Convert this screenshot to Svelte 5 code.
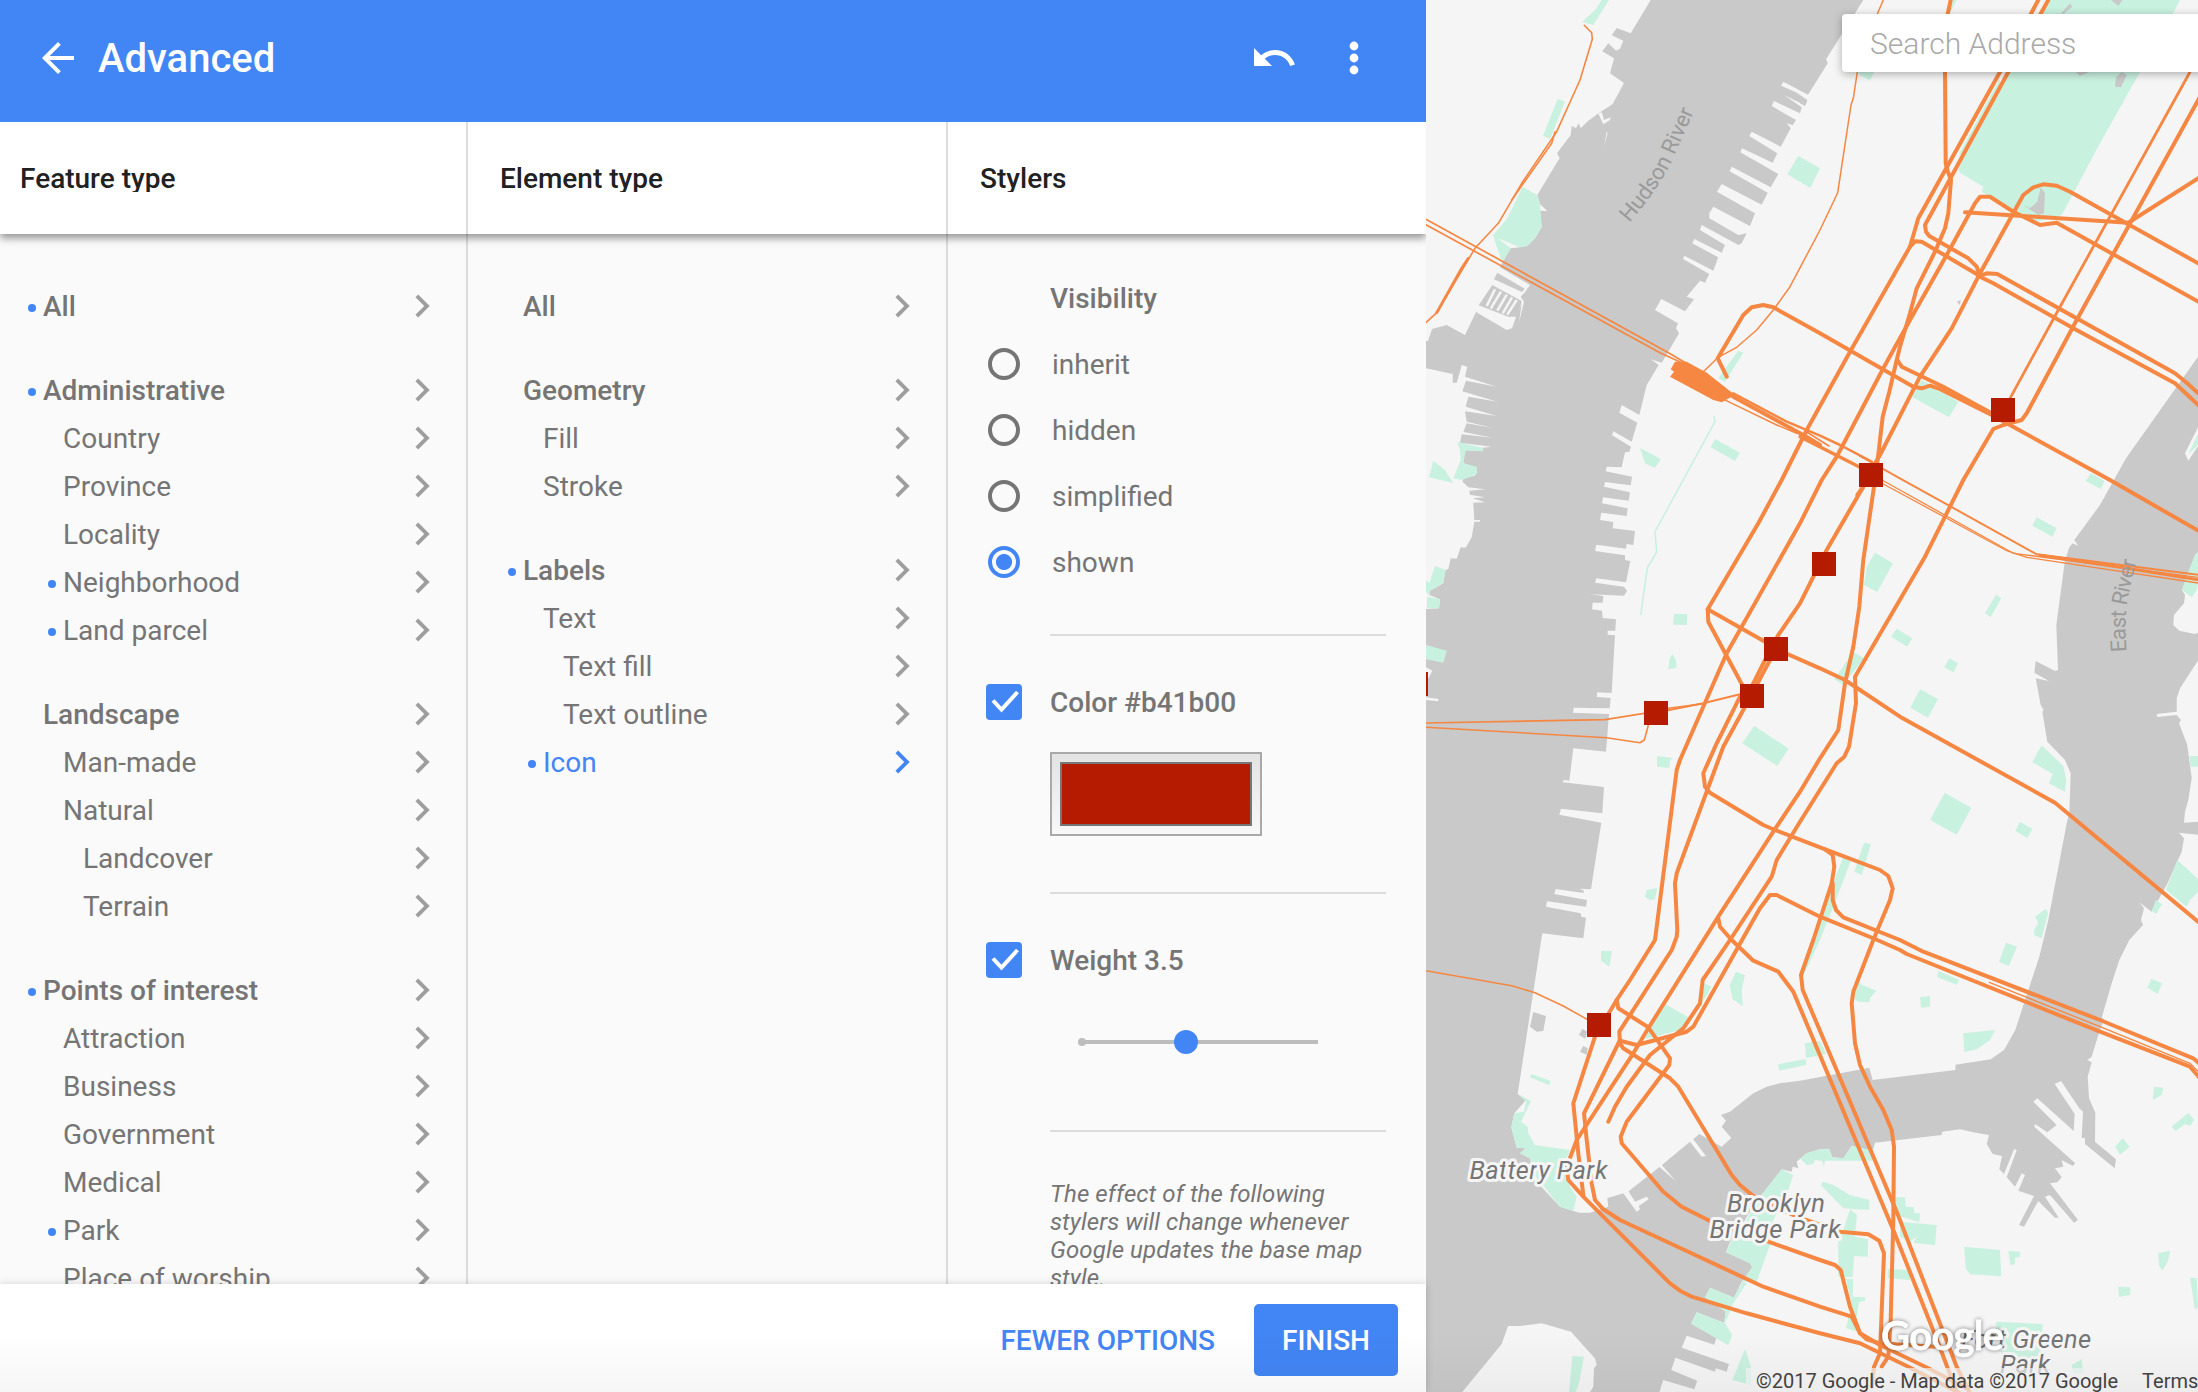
<script>
  const features = [
    [{ name: 'All', dot: true }],
    [
      { name: 'Administrative', dot: true },
      { name: 'Country', level: 1 },
      { name: 'Province', level: 1 },
      { name: 'Locality', level: 1 },
      { name: 'Neighborhood', level: 1, dot: true },
      { name: 'Land parcel', level: 1, dot: true },
    ],
    [
      { name: 'Landscape' },
      { name: 'Man-made', level: 1 },
      { name: 'Natural', level: 1 },
      { name: 'Landcover', level: 2 },
      { name: 'Terrain', level: 2 },
    ],
    [
      { name: 'Points of interest', dot: true },
      { name: 'Attraction', level: 1 },
      { name: 'Business', level: 1 },
      { name: 'Government', level: 1 },
      { name: 'Medical', level: 1 },
      { name: 'Park', level: 1, dot: true },
      { name: 'Place of worship', level: 1 },
    ],
  ];

  const elements = [
    [{ name: 'All' }],
    [{ name: 'Geometry' }, { name: 'Fill', level: 1 }, { name: 'Stroke', level: 1 }],
    [
      { name: 'Labels', dot: true },
      { name: 'Text', level: 1 },
      { name: 'Text fill', level: 2 },
      { name: 'Text outline', level: 2 },
      { name: 'Icon', level: 1, dot: true, active: true },
    ],
  ];

  let visibility = $state('shown');
  const modes = ['inherit', 'hidden', 'simplified', 'shown'];

  // Map geometry is stored per sheet (A-F); each sheet has its own origin
  // and three units to the pixel.
  const sheets = { A: [1420, 0], B: [1800, 0], C: [1420, 460], D: [1800, 460], E: [1420, 920], F: [1800, 920] };

  function points(trace) {
    let origin = sheets.A;
    const out = [];
    for (const token of trace.trim().split(/\s+/)) {
      if (sheets[token]) {
        origin = sheets[token];
        continue;
      }
      const [x, y] = token.split(',').map(Number);
      out.push(`${(origin[0] + x / 3).toFixed(1)},${(origin[1] + y / 3).toFixed(1)}`);
    }
    return out.join(' ');
  }

  const land = [
    'A 18,0 692,0 632,100 590,84 575,106 610,122 600,146 588,152 565,130 547,154 582,175 570,220 612,249 578,312 540,337 505,362 482,385 476,370 468,384 455,378 452,405 411,460 419,474 352,585 360,612 382,633 360,632 365,682 345,715 322,738 300,742 272,745 250,782 240,802 330,855 316,875 302,890 312,905 297,968 305,910 290,945 276,985 260,990 168,936 135,1005 80,975 36,987 24,1024 18,1022',
    'A 18,1105 98,1122 98,1148 110,1148 118,1122 125,1095 142,1100 135,1130 230,1160 138,1142 127,1174 232,1205 145,1190 137,1220 230,1248 135,1234 140,1265 220,1284 140,1270 130,1296 218,1313 125,1303 120,1328 215,1340 130,1350 130,1390 170,1405 165,1428 130,1430 C 128,65 145,82 195,88 148,92 150,104 195,112 158,115 195,127 160,128 163,180 180,180 180,185 163,185 155,232 137,263 122,262 110,296 92,295 85,327 76,330 70,370 30,392 28,405 60,418 57,445 18,447',
    'A 1330,0 1218,178 1223,190 1164,284 1090,245 1083,257 1128,277 1162,300 1155,316 1092,285 1145,322 1140,340 1062,303 1055,318 1128,360 1118,376 1100,370 1112,385 1082,440 995,395 988,408 1072,460 1058,488 966,445 961,457 1075,522 1052,562 935,500 929,514 1043,578 1025,614 905,552 891,575 1005,640 990,678 880,620 868,640 868,655 955,705 980,700 965,730 955,735 845,675 840,690 915,735 905,758 823,717 817,730 895,772 880,812 793,767 789,777 868,822 855,848 840,842 800,890 822,898 795,934 724,897 705,930 774,970 768,985 777,1000 745,1055 725,1088 692,1078 716,1095 680,1155 658,1245 605,1215 598,1238 652,1268 635,1325 580,1294 576,1306 633,1340 628,1355 615,1357 605,1402 560,1400 557,1414 636,1430 C 632,76 555,66 552,80 630,97 626,122 549,112 546,130 623,145 620,168 544,158 540,180 580,186 578,205 645,213 640,255 620,252 618,266 529,254 525,273 615,286 615,300 631,303 618,367 529,355 525,368 612,380 621,392 612,407 510,403 550,408 548,428 518,428 516,448 546,452 548,474 588,478 586,512 563,512 563,524 585,526 575,699 531,697 531,711 572,714 569,745 461,743 459,758 567,762 558,875 460,865 448,962 430,960 429,967 552,981 547,1060 423,1046 418,1064 544,1088 513,1288 478,1286 492,1292 490,1299 407,1287 403,1302 501,1320 498,1340 381,1324 378,1340 482,1360 484,1370 498,1373 490,1435 367,1420 E 293,522 318,540 283,580 274,622 290,683 318,685 300,700 330,715 345,780 420,860 460,873 478,878 510,878 565,860 562,834 612,820 628,812 722,738 810,665 845,710 858,708 820,658 838,642 905,680 934,654 905,620 918,602 903,585 930,575 1000,520 1040,500 1080,490 F 0,482 208,443 218,480 466,450 467,434 572,418 612,390 646,330 672,250 718,110 745,0 D 800,1090 808,1060 812,940 795,900 742,845 727,755 731,750 722,735 707,655 747,663 703,638 707,603 765,633 774,630 769,495 795,300 808,262 818,250 835,258 823,240 900,135 975,0 B 985,1365 1200,1062 1200,0',
    'D 1200,270 1185,285 1160,350 1146,390 1155,405 1152,430 1122,465 1120,495 1138,512 1185,522 1200,516',
    'D 1200,592 1140,685 1130,715 1130,755 1070,762 1071,771 1130,765 1143,780 1137,790 1162,855 1175,955 1165,1020 1155,1055 1152,1088 1200,1085 1200,1125 1137,1118 1152,1135 1145,1175 1100,1275 1055,1355 1018,1327 1032,1345 1023,1380 1029,1395 F 988,60 958,120 935,190 905,293 912,298 895,345 875,410 862,420 875,427 863,470 867,535 886,578 885,665 948,718 944,745 855,672 855,655 845,653 849,575 838,565 783,483 764,492 824,582 821,633 712,535 700,545 770,615 742,637 705,612 703,620 826,730 818,738 785,720 790,740 765,745 785,772 772,787 750,790 834,900 822,908 750,825 735,830 776,893 765,893 715,843 672,920 657,915 702,828 655,812 675,765 665,760 645,800 620,772 650,690 642,688 612,762 598,748 606,708 578,702 560,672 567,645 535,640 480,628 427,635 425,645 225,668 218,692 155,678 130,715 97,712 88,688 60,688 E 1160,700 1130,725 1135,745 1118,740 1115,755 1085,748 1005,850 975,900 930,965 918,997 990,1030 997,1042 965,1085 942,1133 870,1103 855,1132 917,1175 912,1208 830,1177 814,1210 890,1250 883,1274 800,1247 785,1283 927,1332 920,1355 887,1345 885,1355 766,1313 754,1350 832,1382 823,1408 730,1380 717,1420 F 1200,1420',
    'E 127,1416 245,1272 264,1218 300,1218 365,1210 453,1235 500,1288 525,1315 530,1335 522,1345 520,1400 510,1416',
    'B 1155,1360 1200,1270 1200,1330 1165,1382',
    'C 18,622 37,632 18,670',
    'C 18,712 56,717 54,724 18,720',
    'E 715,738 725,735 768,784',
    'E 610,820 625,812 645,845 680,830 686,838 656,858 660,868 650,875',
    'A 535,340 545,337 552,360 572,352 570,360 550,373',
    'A 560,395 563,398 553,438',
  ];

  const ponds = [
    'A 232,818 314,866 306,876 222,838',
    'A 217,855 305,903 292,950 265,950 176,916',
    'B 0,288 22,302 15,318 0,310',
    'E 340,276 378,288 370,333 350,335 330,320',
    'E 487,326 502,335 495,356 477,345',
    'E 490,378 503,385 500,404 480,395',
  ];

  const lakes = [
    'B 665,612 690,625 712,605 722,563 735,580 732,640 715,645',
    'B 810,10 817,20 790,42 782,42',
    'B 828,216 867,216 840,228',
    'B 948,232 965,216 980,225 963,262 945,260',
    'B 933,0 967,0 955,18',
    'B 470,905 482,900 480,915',
  ];

  const docks = ['A 225,868 200,918', 'A 243,875 212,926', 'A 260,884 232,932', 'A 276,892 248,940', 'A 290,900 262,944'];

  const parks = [
    'A 545,0 567,0 520,75 486,66 525,30',
    'A 413,296 435,305 390,417 369,407',
    'A 308,560 352,586 360,612 365,682 345,715 322,738 300,742 232,714 272,745 250,782 242,775 219,706 262,655',
    'A 1135,468 1200,505 1171,564 1102,523',
    'A 955,1052 970,1058 915,1145 895,1135',
    'A 885,1317 960,1358 945,1383 872,1342',
    'A 660,1343 723,1378 705,1404 675,1390',
    'A 112,1326 190,1344 190,1354 137,1352 130,1390 170,1400 172,1420 160,1428 C 125,60 100,55 122,0 A 120,1350',
    'C 40,2 75,30 100,69 27,52',
    'C 45,318 78,330 68,370 30,392 25,405 18,395 18,360 28,370',
    'C 22,410 60,418 57,445 20,445',
    'C 18,555 80,572 70,608 18,598',
    'C 762,462 802,462 801,495 759,494',
    'C 757,582 768,600 770,623 745,628 748,598',
    'C 1002,797 1106,866 1072,918 967,850',
    'C 711,888 760,894 750,900 748,924 711,920',
    'C 680,1290 712,1284 705,1318 690,1320 675,1310',
    'B 750,0 1140,0 1118,42 1020,216 900,430 785,645 710,665 640,635 545,575 550,560 480,518 475,505 630,216',
    'B 600,235 500,420 478,462 488,462 600,262',
    'B 450,0 470,0 450,40',
    'B 175,216 222,216 210,242 180,225',
    'B 365,1140 475,1205 447,1252 335,1190',
    'B 1200,1290 1165,1362 1200,1330',
    'D 873,40 913,62 903,88 857,63',
    'D 710,172 770,205 757,230 697,197',
    'D 1200,270 1185,285 1160,350 1146,390 1175,412 1190,390 1200,340',
    'D 225,278 279,310 232,396 192,375 200,320',
    'D 588,404 604,415 572,471 555,460',
    'D 290,506 337,535 322,560 273,530',
    'D 160,575 192,595 130,675 103,658',
    'D 448,595 474,610 460,637 433,622',
    'D 360,688 414,717 384,773 331,743',
    'D 725,856 790,918 799,960 795,996 747,970 758,942 697,907',
    'D 434,998 514,1043 470,1124 390,1080',
    'D 660,1085 697,1107 682,1134 646,1112',
    'D 192,1148 213,1152 185,1245 163,1235',
    'D 130,1190 152,1203 100,1340 60,1440 F 30,125 8,170 0,155',
    'D 738,1346 744,1360 725,1435 702,1425 702,1410 715,1390 705,1370',
    'D 1132,1200 1200,1262 1200,1290 1170,1320 1160,1340 1098,1290',
    'D 1068,1320 1086,1333 1068,1362 1055,1352',
    'D 1168,888 1200,888 1200,920 1172,920',
    'E 543,93 576,93 568,140 543,122',
    'E 948,155 975,165 965,210 968,258 938,238 929,195',
    'E 735,252 805,292 780,330 675,358 690,320',
    'E 852,190 875,200 845,250',
    'E 335,462 392,483 388,496 330,472',
    'E 1155,370 1200,362 1218,402 1158,414',
    'E 1074,433 1158,417 1158,435 1078,452',
    'E 293,522 333,543 303,605 323,620 325,640 345,675 380,680 450,690 430,740 450,800 470,830 460,873 420,860 340,760 330,715 300,700 318,685 290,683 274,622 283,580 312,575 318,545',
    'E 1085,748 1120,765 1095,840 1060,900 1050,975 1010,1085 965,1085 997,1042 990,1030 918,997 935,960 980,900 1005,850',
    'E 870,1103 942,1133 968,1085 980,1090 940,1150 915,1210 937,1245 925,1276 814,1212 830,1177 912,1208 917,1175 855,1132',
    'E 975,1288 993,1340 993,1395 937,1380',
    'E 457,1308 492,1310 478,1385 467,1416 447,1416',
    'E 1130,725 1160,700 F 60,688 88,688 97,712 130,715 155,678 220,692 217,722 75,722 72,740 66,722 45,720 40,732 20,735 0,715',
    'F 175,190 229,212 210,235 208,247 175,245 162,235',
    'F 360,232 390,228 390,260 363,263',
    'F 490,340 586,330 570,360 530,388 493,396',
    'F 618,68 651,80 626,138 597,125',
    'F 415,152 478,180 470,194 412,172',
    'F 1054,176 1086,190 1073,222 1042,203',
    'F 1062,500 1090,503 1085,525 1058,540',
    'F 1165,578 1183,600 1170,617 1155,612 1127,633 1115,620',
    'F 968,655 989,680 960,704 945,680',
    'F 1075,1000 1111,992 1103,1025 1087,1053 1077,1035',
    'F 955,1100 990,1102 991,1125 957,1131',
    'F 1170,1073 1190,1075 1194,1160 1185,1170',
    'F 493,980 600,990 604,1069 510,1063 497,1045',
    'F 625,992 660,995 660,1010 645,1013 645,1033 631,1035',
    'F 70,785 100,795 150,825 208,840 208,870 130,865 62,795',
    'F 150,868 171,885 165,950 204,958 203,1010 163,1008 158,1072 115,1070 115,930 130,930',
    'F 285,832 315,832 317,860 342,862 342,878 360,880 358,907 320,895 285,885',
    'F 300,905 410,915 405,976 340,968 352,948 330,965 300,950',
    'F 263,1047 330,1050 330,1080 263,1075',
    'F 138,1077 160,1078 158,1130 195,1132 195,1143 178,1145 165,1220 190,1240 138,1225 155,1150',
    'F 588,1205 728,1212 720,1310 640,1330 595,1290',
    'F 815,1335 845,1318 850,1362 820,1360',
  ];

  const trails = ['A 882,1248 885,1265 C 705,215 710,275 682,325 662,465'];

  // [line width in px, trace]
  const routes = [
    [4, 'B 452,0 443,42 435,216 437,490 442,510 453,540 445,640 435,685 405,755 350,865 330,940 300,1040 290,1080 268,1175 248,1250 232,1390 D 222,80 190,300 178,440 160,560 135,670 115,810 60,895 0,995 C 1060,1115 895,1370 E 685,325 640,400 470,660 440,740 445,780 490,830 750,1090 780,1112 815,1130 980,1180 1200,1240 F 180,1270 325,1340 480,1420'],
    [4, 'B 715,0 600,216 355,655 330,740 153,1050 20,1290 -55,1440 C 1015,190 863,448 865,485 965,672 996,708'],
    [4, 'B 745,0 625,216 375,675 378,695 388,708 505,775 530,800 540,830 580,850 820,985 1125,1150 1200,1220'],
    [4, 'B 330,740 345,724 365,725 540,828 560,820 592,822 1125,1120 1160,1148 1200,1185'],
    [4, 'B 495,637 985,668 1200,531'],
    [4, 'B 1200,290 830,960 680,1240 665,1260 610,1275 580,1287 490,1440 D 375,290 165,650 168,730 147,860 133,890 110,910 0,1085 C 1070,1200 1055,1250 930,1440 E 848,180 840,250 790,325 690,405 620,500 585,560 565,605'],
    [2.8, 'B 1170,216 775,930 630,1195'],
    [4, 'B 1200,908 770,668 720,675 640,635 570,590 540,590 525,610 440,765 330,960 250,1105 110,1370 65,1440 D 0,190 C 965,500 920,580 780,900 770,930 705,1440 E 705,60 630,180 590,240 560,290 525,350 460,550 475,700 490,825'],
    [4, 'B 1200,793 810,575 770,557 730,553 700,562 670,585 540,820 455,985 360,1130 240,1365 213,1410 D 190,80 80,270 0,430 C 1075,525 1035,600 995,680 960,710 890,850 850,940 855,980 870,998 1030,1095 1065,1110 1200,1162 D 240,1230 265,1248 278,1285 270,1320 220,1440 F 160,215 155,250 165,370 180,435 210,500 250,570 275,630 282,680 280,900 272,1200 265,1310 245,1340'],
    [4, 'C 1050,600 975,740 910,860 862,990 770,1240 765,1270 772,1410 E 770,50 755,90 598,335 600,370 610,385 750,475 775,500 935,765 960,795 1000,828 1130,890 F 120,935 205,943 238,962 252,1000 240,1300 222,1340 215,1400'],
    [4, 'C 863,448 1035,545 1068,567 1200,625 D 135,660 300,770 765,1028 1200,1390'],
    [4, 'A 920,1130 893,1075 970,945 995,922 1030,915 1060,922 1200,1000 B 340,1160 365,1165 390,1157 415,1165 575,1245 620,1270 930,1440 D 1200,215'],
    [4, 'B 292,1080 305,1100 430,1160 575,1240'],
    [4, 'E 590,240 595,265 685,322 750,415 748,435 620,605 602,650 605,670 730,815 785,860 870,903 1045,965 1200,1020 F 105,1035 122,1050 150,1160 180,1240 200,1258 240,1270 405,1280'],
    [4, 'E 600,360 492,580 500,660 515,790 525,840 550,868 600,900 750,970 1030,1100 1200,1160 F 155,1190 180,1240 240,1275 385,1345 500,1405'],
    [4, 'E 600,362 650,375 800,335 820,320 1000,0 C 1020,1345 1050,1305 1070,1305 1200,1370 D 225,1437 F 300,90 320,102 900,335 1170,440 1200,475'],
    [4, 'D 75,1168 98,1185 103,1220 95,1270 40,1440 F 3,165 8,210 290,875 470,1340 510,1420'],
    [4, 'D 98,1270 98,1320 108,1350 130,1372 300,1440 F 370,95 900,300 1180,415 1200,432'],
    [4, 'C 895,1375 900,1400 935,1440 E 1000,122 1075,155 1120,215 F 280,930 415,1270 470,1416'],
    [1.3, 'F 568,187 900,320 1170,430 1200,460'],
    [1.6, 'A 493,76 515,98 517,118 480,240 410,395 305,550 235,670 165,745 50,938 18,968'],
    [1.6, 'A 405,395 395,430 275,600'],
    [2.8, 'A 145,775 125,805 50,938'],
    [1.7, 'A 18,658 740,1055 850,1120'],
    [1.7, 'A 18,674 720,1058 800,1095'],
    [1.5, 'B 250,0 232,42 172,216 160,295 153,315 113,578 60,690 -30,860 A 1060,930 1010,990 950,1042 893,1073 850,1115'],
    [4, 'A 900,1160 940,1190 1155,1308 1200,1335'],
    [2.5, 'A 940,1180 1100,1265 1200,1307 B 120,1335 215,1385'],
    [1.4, 'A 905,1195 1070,1275 1130,1300'],
    [3.4, 'B 0,1310 180,1402'],
    [1.5, 'B 20,1296 87,1338'],
    [2, 'B 180,1368 305,1438 D 710,283 1200,345'],
    [1.3, 'D 250,62 640,280 1200,353'],
    [1.3, 'D 250,72 620,272 680,292 1200,370'],
    [3, 'D 720,286 980,325 1200,360'],
    [1.7, 'C 18,789 555,779 672,760'],
    [1.6, 'C 18,802 560,833 660,848 673,840 685,796'],
    [2, 'C 744,751 850,730 960,703'],
    [1.5, 'C 744,745 850,731'],
    [1.5, 'E 18,152 275,197 345,218 430,258 505,300'],
    [4, 'D 190,80 172,105'],
  ];

  const yard = 'A 765,1085 800,1085 860,1118 945,1185 905,1207 880,1200 750,1130 762,1115 752,1108';

  const stations = [
    [1991, 398],
    [1859, 463],
    [1812, 552],
    [1764, 637],
    [1740, 684],
    [1644, 701],
    [1404, 672],
    [1587, 1013],
  ];
</script>

{#snippet list(groups)}
  {#each groups as group}
    <ul>
      {#each group as item}
        <li class="level-{item.level ?? 0}" class:active={item.active}>
          <span class="mark" class:dot={item.dot}></span>
          <span class="name">{item.name}</span>
          <svg class="chevron" viewBox="0 0 24 24"><path d="M10 6L8.590 7.410 13.170 12l-4.580 4.590L10 18l6-6z" /></svg>
        </li>
      {/each}
    </ul>
  {/each}
{/snippet}

{#snippet check()}
  <span class="check"><svg viewBox="0 0 36 36"><path d="M7 16.500l8.500 9L31.500 8" /></svg></span>
{/snippet}

<div class="app">
  <section class="panel">
    <header class="bar">
      <svg viewBox="0 0 24 24"><path d="M20 11H7.830l5.590-5.590L12 4l-8 8 8 8 1.410-1.410L7.830 13H20v-2z" /></svg>
      <h1>Advanced</h1>
      <svg viewBox="0 0 24 24"><path d="M12.500 8c-2.650 0-5.050.990-6.900 2.600L2 7v9h9l-3.620-3.620c1.390-1.160 3.160-1.880 5.120-1.880 3.540 0 6.550 2.310 7.600 5.500l2.370-.780C21.080 11.030 17.150 8 12.500 8z" /></svg>
      <svg class="more" viewBox="0 0 24 24"><circle cx="12" cy="6" r="2.200" /><circle cx="12" cy="12" r="2.200" /><circle cx="12" cy="18" r="2.200" /></svg>
    </header>

    <div class="heads">
      <h2><span>Feature type</span></h2>
      <h2><span>Element type</span></h2>
      <h2><span>Stylers</span></h2>
    </div>

    <div class="columns">
      <div class="column">{@render list(features)}</div>
      <div class="column">{@render list(elements)}</div>
      <div class="column stylers">
        <h3>Visibility</h3>
        <div class="modes">
          {#each modes as mode}
            <button class="mode" class:on={visibility === mode} onclick={() => (visibility = mode)}>
              <span class="radio"></span><span class="label">{mode}</span>
            </button>
          {/each}
        </div>
        <hr />
        <div class="option">{@render check()}<h3 class="label">Color #b41b00</h3></div>
        <div class="well"><div class="swatch"></div></div>
        <hr />
        <div class="option">{@render check()}<h3 class="label">Weight 3.5</h3></div>
        <svg class="slider" viewBox="0 0 242 24">
          <path d="M4 12H240" />
          <circle class="stop" cx="4" cy="12" r="4" />
          <circle class="knob" cx="108" cy="12" r="12" />
        </svg>
        <hr />
        <p>The effect of the following stylers will change whenever Google updates the base map style.</p>
      </div>
    </div>

    <footer>
      <button class="fewer">FEWER OPTIONS</button>
      <button class="finish">FINISH</button>
    </footer>
  </section>

  <section class="map">
    <svg class="canvas" viewBox="1426 0 772 1392">
      <g class="land">{#each land as t}<polygon points={points(t)} />{/each}</g>
      <g class="water">{#each ponds as t}<polygon points={points(t)} />{/each}</g>
      <g class="dock">{#each docks as t}<polyline points={points(t)} />{/each}</g>
      <g class="park">{#each parks as t}<polygon points={points(t)} />{/each}</g>
      <g class="water">{#each lakes as t}<polygon points={points(t)} />{/each}</g>
      <g class="trail">{#each trails as t}<polyline points={points(t)} />{/each}</g>
      <g class="route">{#each routes as [width, t]}<polyline points={points(t)} stroke-width={width} />{/each}</g>
      <polygon class="yard" points={points(yard)} />
      <g class="station">{#each stations as [x, y]}<rect {x} {y} width="24" height="24" />{/each}</g>

      <path id="hudson" d="M1629 223Q1661 187 1675 154L1700 98" fill="none" />
      <path id="east" d="M2126.500 652Q2124 612 2129 594L2142 535" fill="none" />
      <g class="river">
        <text><textPath href="#hudson" textLength="130">Hudson River</textPath></text>
        <text><textPath href="#east" textLength="92">East River</textPath></text>
      </g>
      <g class="place">
        <text x="1469.500" y="1179" textLength="138">Battery Park</text>
        <text x="1776" y="1212" text-anchor="middle" textLength="98">Brooklyn</text>
        <text x="1775" y="1238" text-anchor="middle" textLength="131">Bridge Park</text>
        <text x="2026" y="1348" text-anchor="middle" textLength="130">Fort Greene</text>
        <text x="2025" y="1373" text-anchor="middle" textLength="50">Park</text>
      </g>
      <text class="logo" x="1881" y="1350" textLength="123">Google</text>
    </svg>
    <div class="search">Search Address</div>
    <div class="credits"><span>©2017 Google - Map data ©2017 Google</span><span>Terms</span></div>
  </section>
  <div class="fade"></div>
</div>

<style>
  :global(body) {
    margin: 0;
    background: #f5f5f5;
  }
  .app {
    position: relative;
    display: flex;
    width: 2198px;
    height: 1392px;
    overflow: hidden;
    font: 28px/48px Roboto, sans-serif;
    color: #757575;
  }
  h1, h2, h3, p, ul, hr {
    margin: 0;
    padding: 0;
    border: 0;
  }
  h1, h2, h3 {
    font-weight: 500;
  }
  button {
    border: 0;
    padding: 0;
    background: none;
    font: inherit;
    color: inherit;
    text-align: left;
  }
  .panel {
    display: flex;
    flex-direction: column;
    flex: none;
    width: 1426px;
    background: #fafafa;
    position: relative;
    z-index: 1;
  }
  .bar {
    display: flex;
    align-items: center;
    flex: none;
    box-sizing: border-box;
    height: 122px;
    padding: 0 48px 6px 34px;
    background: #4285f4;
    color: #fff;
  }
  .bar svg {
    width: 48px;
    height: 48px;
    fill: #fff;
  }
  .bar h1 {
    flex: 1;
    padding: 2px 0 0 16px;
    font-size: 40px;
  }
  .bar .more {
    margin-left: 32px;
  }
  .heads, .columns {
    display: grid;
    grid-template-columns: 468px 480px 478px;
  }
  .heads {
    flex: none;
    height: 112px;
    background: #fff;
    box-shadow: 0 4px 8px rgba(0, 0, 0, 0.42);
    clip-path: inset(0 0 -20px 0);
    position: relative;
  }
  .heads h2 {
    padding: 43px 0 0 32px;
    border-right: 2px solid #dcdcdc;
    font-size: 28px;
    line-height: 28px;
    color: #212121;
  }
  .heads span {
    display: block;
    height: 27px;
    overflow: hidden;
  }
  .heads h2:first-child {
    padding-left: 20px;
  }
  .heads h2:last-child {
    border: 0;
  }
  .columns {
    height: 1050px;
    overflow: hidden;
  }
  .column {
    box-sizing: border-box;
    height: 1050px;
    padding: 48px 36px 0 40px;
    border-right: 2px solid #dcdcdc;
  }
  .column:first-child {
    padding-left: 28px;
  }
  .column ul {
    list-style: none;
    margin-bottom: 36px;
  }
  .column li {
    display: flex;
    align-items: center;
    height: 48px;
  }
  .mark {
    width: 8px;
    height: 8px;
    margin: 4px 7px 0 0;
    border-radius: 50%;
  }
  .dot {
    background: #4285f4;
  }
  .name {
    flex: 1;
    padding-top: 2px;
  }
  .label {
    padding-top: 2px;
  }
  .level-0 {
    font-weight: 500;
  }
  .level-1 {
    padding-left: 20px;
  }
  .level-2 {
    padding-left: 40px;
  }
  .active {
    color: #4285f4;
  }
  .chevron {
    width: 46px;
    height: 46px;
    margin-right: -15px;
    fill: #9e9e9e;
  }
  .active .chevron {
    fill: #4285f4;
  }
  .column.stylers {
    padding: 41px 40px 0 102px;
    border: 0;
  }
  .stylers h3 {
    font-size: 28px;
    line-height: 48px;
  }
  .modes {
    display: flex;
    flex-direction: column;
    margin: 8px 0 39px -62px;
  }
  .mode {
    display: flex;
    align-items: center;
    height: 66px;
  }
  .radio {
    box-sizing: border-box;
    width: 32px;
    height: 32px;
    margin-right: 32px;
    border: 4px solid #757575;
    border-radius: 50%;
  }
  .on .radio {
    border-color: #4285f4;
    background: radial-gradient(circle, #4285f4 7.600px, transparent 8.400px);
  }
  .stylers hr {
    height: 2px;
    background: #dcdcdc;
  }
  .option {
    display: flex;
    align-items: center;
    height: 36px;
    margin: 48px 0 0 -64px;
  }
  .check {
    width: 36px;
    height: 36px;
    margin-right: 28px;
    border-radius: 4px;
    background: #4285f4;
  }
  .check svg {
    display: block;
    fill: none;
    stroke: #fff;
    stroke-width: 4;
  }
  .well {
    box-sizing: border-box;
    width: 212px;
    height: 84px;
    margin: 32px 0 56px;
    padding: 8px;
    border: 2px solid #a9a9a9;
    background: linear-gradient(#e3e3e3, #f8f8f8);
  }
  .swatch {
    box-sizing: border-box;
    height: 64px;
    border: 2px solid #777;
    background: #b41b00;
  }
  .slider {
    display: block;
    width: 242px;
    height: 24px;
    margin: 52px 0 76px 28px;
  }
  .slider path {
    stroke: #bdbdbd;
    stroke-width: 4;
  }
  .stop {
    fill: #bdbdbd;
  }
  .knob {
    fill: #4285f4;
  }
  .stylers p {
    width: 330px;
    margin-top: 48px;
    font-size: 24px;
    font-style: italic;
    letter-spacing: 0.1px;
    line-height: 28px;
  }
  footer {
    display: flex;
    align-items: center;
    justify-content: flex-end;
    gap: 39px;
    flex: none;
    height: 108px;
    padding: 4px 28px 0 0;
    box-sizing: border-box;
    background: #fff;
    box-shadow: 0 0 8px rgba(0, 0, 0, 0.16);
    font-weight: 500;
    position: relative;
  }
  .fewer {
    padding-top: 1px;
    color: #4285f4;
  }
  .finish {
    width: 144px;
    height: 72px;
    padding-top: 1px;
    border-radius: 5px;
    background: #4285f4;
    color: #fff;
    text-align: center;
  }
  .map {
    position: relative;
    flex: 1;
    background: #c9c9c9;
  }
  .canvas {
    display: block;
    width: 772px;
    height: 1392px;
  }
  .land {
    fill: #f5f5f5;
  }
  .water {
    fill: #c9c9c9;
  }
  .park {
    fill: #c9f1e0;
  }
  .dock {
    stroke: #f5f5f5;
    stroke-width: 2.500;
  }
  .trail {
    fill: none;
    stroke: #c9f1e0;
    stroke-width: 1.600;
  }
  .route {
    fill: none;
    stroke: #f58742;
    stroke-linejoin: round;
    stroke-linecap: round;
  }
  .yard {
    fill: #f58742;
  }
  .station {
    fill: #b41b00;
  }
  .river {
    font-size: 22px;
    fill: #9a9a9a;
  }
  .place {
    font-size: 25.500px;
    font-style: italic;
    fill: #757575;
    stroke: #f5f5f5;
    stroke-width: 6;
    stroke-linejoin: round;
    paint-order: stroke;
  }
  .logo {
    font: 600 40px Lato, sans-serif;
    fill: #fff;
    stroke: #fff;
    stroke-width: 0.8;
    filter: drop-shadow(0 0 2px rgba(0, 0, 0, 0.5));
  }
  .search {
    position: absolute;
    top: 14px;
    left: 416px;
    width: 400px;
    height: 58px;
    box-sizing: border-box;
    padding-left: 28px;
    border-radius: 4px;
    background: #fff;
    box-shadow: 0 2px 8px rgba(0, 0, 0, 0.3);
    font-size: 30px;
    font-weight: 300;
    line-height: 60px;
    color: #a9a9a9;
  }
  .credits {
    position: absolute;
    right: 0;
    bottom: 0;
    display: flex;
    gap: 24px;
    width: 442px;
    height: 24px;
    padding-left: 10px;
    background: rgba(245, 245, 245, 0.7);
    overflow: hidden;
    font-size: 20px;
    line-height: 26px;
    white-space: nowrap;
    color: #444;
  }
  .fade {
    position: absolute;
    left: 0;
    right: 0;
    bottom: 0;
    height: 60px;
    background: linear-gradient(transparent, rgba(0, 0, 0, 0.035));
    pointer-events: none;
    z-index: 2;
  }
</style>
